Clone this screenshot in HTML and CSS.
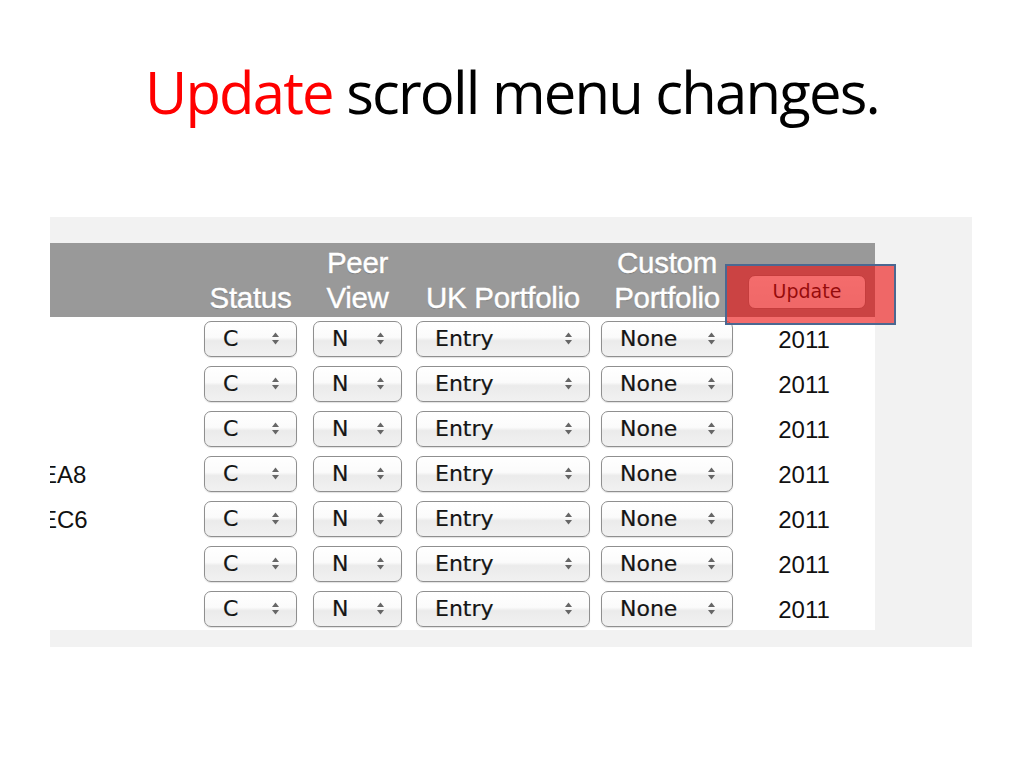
FILE: index.html
```html
<!DOCTYPE html>
<html>
<head>
<meta charset="utf-8">
<link rel="stylesheet" href="styles.css">
</head>
<body>
<h1 class="title"><span class="red">Update</span> scroll menu changes.</h1>
<div class="shot">
  <div class="table">
    <div class="row head">
      <div class="hcell"></div>
      <div class="hcell"><span class="w-s">Status</span></div>
      <div class="hcell"><span class="w-p">Peer<br>View</span></div>
      <div class="hcell"><span class="w-u">UK Portfolio</span></div>
      <div class="hcell"><span class="w-c">Custom<br>Portfolio</span></div>
      <div class="hcell hbtn"><span class="btn">Update</span></div>
    </div>
    <div class="row"><div class="label"></div><div class="sel w-s"><span>C</span><svg class="arr" viewBox="0 0 7 12"><polygon points="0,4.5 3.5,0 7,4.5"/><polygon points="0,7.5 3.5,12 7,7.5"/></svg></div><div class="sel w-p"><span>N</span><svg class="arr" viewBox="0 0 7 12"><polygon points="0,4.5 3.5,0 7,4.5"/><polygon points="0,7.5 3.5,12 7,7.5"/></svg></div><div class="sel w-u"><span>Entry</span><svg class="arr" viewBox="0 0 7 12"><polygon points="0,4.5 3.5,0 7,4.5"/><polygon points="0,7.5 3.5,12 7,7.5"/></svg></div><div class="sel w-c"><span>None</span><svg class="arr" viewBox="0 0 7 12"><polygon points="0,4.5 3.5,0 7,4.5"/><polygon points="0,7.5 3.5,12 7,7.5"/></svg></div><div class="year">2011</div></div>
    <div class="row"><div class="label"></div><div class="sel w-s"><span>C</span><svg class="arr" viewBox="0 0 7 12"><polygon points="0,4.5 3.5,0 7,4.5"/><polygon points="0,7.5 3.5,12 7,7.5"/></svg></div><div class="sel w-p"><span>N</span><svg class="arr" viewBox="0 0 7 12"><polygon points="0,4.5 3.5,0 7,4.5"/><polygon points="0,7.5 3.5,12 7,7.5"/></svg></div><div class="sel w-u"><span>Entry</span><svg class="arr" viewBox="0 0 7 12"><polygon points="0,4.5 3.5,0 7,4.5"/><polygon points="0,7.5 3.5,12 7,7.5"/></svg></div><div class="sel w-c"><span>None</span><svg class="arr" viewBox="0 0 7 12"><polygon points="0,4.5 3.5,0 7,4.5"/><polygon points="0,7.5 3.5,12 7,7.5"/></svg></div><div class="year">2011</div></div>
    <div class="row"><div class="label"></div><div class="sel w-s"><span>C</span><svg class="arr" viewBox="0 0 7 12"><polygon points="0,4.5 3.5,0 7,4.5"/><polygon points="0,7.5 3.5,12 7,7.5"/></svg></div><div class="sel w-p"><span>N</span><svg class="arr" viewBox="0 0 7 12"><polygon points="0,4.5 3.5,0 7,4.5"/><polygon points="0,7.5 3.5,12 7,7.5"/></svg></div><div class="sel w-u"><span>Entry</span><svg class="arr" viewBox="0 0 7 12"><polygon points="0,4.5 3.5,0 7,4.5"/><polygon points="0,7.5 3.5,12 7,7.5"/></svg></div><div class="sel w-c"><span>None</span><svg class="arr" viewBox="0 0 7 12"><polygon points="0,4.5 3.5,0 7,4.5"/><polygon points="0,7.5 3.5,12 7,7.5"/></svg></div><div class="year">2011</div></div>
    <div class="row"><div class="label"><span>EA8</span></div><div class="sel w-s"><span>C</span><svg class="arr" viewBox="0 0 7 12"><polygon points="0,4.5 3.5,0 7,4.5"/><polygon points="0,7.5 3.5,12 7,7.5"/></svg></div><div class="sel w-p"><span>N</span><svg class="arr" viewBox="0 0 7 12"><polygon points="0,4.5 3.5,0 7,4.5"/><polygon points="0,7.5 3.5,12 7,7.5"/></svg></div><div class="sel w-u"><span>Entry</span><svg class="arr" viewBox="0 0 7 12"><polygon points="0,4.5 3.5,0 7,4.5"/><polygon points="0,7.5 3.5,12 7,7.5"/></svg></div><div class="sel w-c"><span>None</span><svg class="arr" viewBox="0 0 7 12"><polygon points="0,4.5 3.5,0 7,4.5"/><polygon points="0,7.5 3.5,12 7,7.5"/></svg></div><div class="year">2011</div></div>
    <div class="row"><div class="label"><span>EC6</span></div><div class="sel w-s"><span>C</span><svg class="arr" viewBox="0 0 7 12"><polygon points="0,4.5 3.5,0 7,4.5"/><polygon points="0,7.5 3.5,12 7,7.5"/></svg></div><div class="sel w-p"><span>N</span><svg class="arr" viewBox="0 0 7 12"><polygon points="0,4.5 3.5,0 7,4.5"/><polygon points="0,7.5 3.5,12 7,7.5"/></svg></div><div class="sel w-u"><span>Entry</span><svg class="arr" viewBox="0 0 7 12"><polygon points="0,4.5 3.5,0 7,4.5"/><polygon points="0,7.5 3.5,12 7,7.5"/></svg></div><div class="sel w-c"><span>None</span><svg class="arr" viewBox="0 0 7 12"><polygon points="0,4.5 3.5,0 7,4.5"/><polygon points="0,7.5 3.5,12 7,7.5"/></svg></div><div class="year">2011</div></div>
    <div class="row"><div class="label"></div><div class="sel w-s"><span>C</span><svg class="arr" viewBox="0 0 7 12"><polygon points="0,4.5 3.5,0 7,4.5"/><polygon points="0,7.5 3.5,12 7,7.5"/></svg></div><div class="sel w-p"><span>N</span><svg class="arr" viewBox="0 0 7 12"><polygon points="0,4.5 3.5,0 7,4.5"/><polygon points="0,7.5 3.5,12 7,7.5"/></svg></div><div class="sel w-u"><span>Entry</span><svg class="arr" viewBox="0 0 7 12"><polygon points="0,4.5 3.5,0 7,4.5"/><polygon points="0,7.5 3.5,12 7,7.5"/></svg></div><div class="sel w-c"><span>None</span><svg class="arr" viewBox="0 0 7 12"><polygon points="0,4.5 3.5,0 7,4.5"/><polygon points="0,7.5 3.5,12 7,7.5"/></svg></div><div class="year">2011</div></div>
    <div class="row"><div class="label"></div><div class="sel w-s"><span>C</span><svg class="arr" viewBox="0 0 7 12"><polygon points="0,4.5 3.5,0 7,4.5"/><polygon points="0,7.5 3.5,12 7,7.5"/></svg></div><div class="sel w-p"><span>N</span><svg class="arr" viewBox="0 0 7 12"><polygon points="0,4.5 3.5,0 7,4.5"/><polygon points="0,7.5 3.5,12 7,7.5"/></svg></div><div class="sel w-u"><span>Entry</span><svg class="arr" viewBox="0 0 7 12"><polygon points="0,4.5 3.5,0 7,4.5"/><polygon points="0,7.5 3.5,12 7,7.5"/></svg></div><div class="sel w-c"><span>None</span><svg class="arr" viewBox="0 0 7 12"><polygon points="0,4.5 3.5,0 7,4.5"/><polygon points="0,7.5 3.5,12 7,7.5"/></svg></div><div class="year">2011</div></div>
  </div>
  <div class="highlight"></div>
</div>
</body>
</html>
```
FILE: styles.css
```css
html, body {
  margin: 0;
  padding: 0;
  background: #ffffff;
}
body {
  width: 1024px;
  height: 768px;
  overflow: hidden;
}
.title {
  margin: 0;
  padding-top: 57px;
  height: 70px;
  line-height: 70px;
  text-align: center;
  font-family: "Open Sans", "Liberation Sans", sans-serif;
  font-weight: 400;
  font-size: 58px;
  letter-spacing: -1.8px;
  color: #000;
}
.title .red {
  color: #ff0000;
}
.shot {
  position: relative;
  margin: 90px 0 0 50px;
  width: 922px;
  height: 430px;
  background: #f2f2f2;
  padding-top: 26px;
  box-sizing: border-box;
}
.table {
  width: 825px;
  height: 387px;
  overflow: hidden;
  background: #ffffff;
}
.row {
  display: grid;
  grid-template-columns: 154px 109px 103px 185px 132px 1fr;
  height: 45px;
  align-items: center;
}
.row.head {
  height: 74px;
  background: #999999;
  align-items: end;
}
.hcell {
  padding-bottom: 2px;
  font-family: "Liberation Sans", Arial, sans-serif;
  font-size: 29.5px;
  line-height: 35px;
  color: #ffffff;
  text-shadow: 0 1px 1px rgba(0, 0, 0, 0.2);
  -webkit-text-stroke: 0.4px #ffffff;
  letter-spacing: -0.3px;
}
.hcell span {
  display: block;
  text-align: center;
}
.w-s { width: 93px; }
.w-p { width: 89px; }
.w-u { width: 174px; }
.w-c { width: 132px; }
.hbtn {
  padding-bottom: 8px;
  display: flex;
  justify-content: center;
  padding-left: 6px;
}
.hbtn .btn {
  width: 118px;
  height: 34px;
  box-sizing: border-box;
  border: 1px solid #8a8a8a;
  border-radius: 7px;
  background: linear-gradient(#ffffff, #f4f4f4);
  font-family: "DejaVu Sans", sans-serif;
  font-size: 19px;
  line-height: 31px;
  color: #111;
  text-shadow: none;
  -webkit-text-stroke: 0;
  letter-spacing: 0;
}
.label {
  overflow: hidden;
  font-family: "Liberation Sans", Arial, sans-serif;
  font-size: 24px;
  color: #111;
  white-space: nowrap;
}
.label span {
  display: block;
  margin-left: -9px;
}
.sel {
  height: 36px;
  margin-top: -2px;
  box-sizing: border-box;
  border: 1px solid #8f8f8f;
  border-radius: 7px;
  background: linear-gradient(#ffffff 0%, #fbfbfb 45%, #ebebeb 55%, #f1f1f1 100%);
  box-shadow: 0 1px 1px rgba(0, 0, 0, 0.12);
  display: flex;
  align-items: center;
  padding: 0 17px 0 18px;
  font-family: "DejaVu Sans", sans-serif;
  font-size: 22px;
  color: #151515;
  -webkit-text-stroke: 0.2px #151515;
}
.sel .arr {
  margin-left: auto;
  width: 7px;
  height: 13px;
  fill: #666666;
}
.year {
  text-align: center;
  font-family: "Liberation Sans", Arial, sans-serif;
  font-size: 24px;
  color: #111;
}
.highlight {
  position: absolute;
  left: 675px;
  top: 47px;
  width: 171px;
  height: 61px;
  box-sizing: border-box;
  border: 2px solid #4b6891;
  background: rgba(236, 10, 10, 0.6);
}
```
